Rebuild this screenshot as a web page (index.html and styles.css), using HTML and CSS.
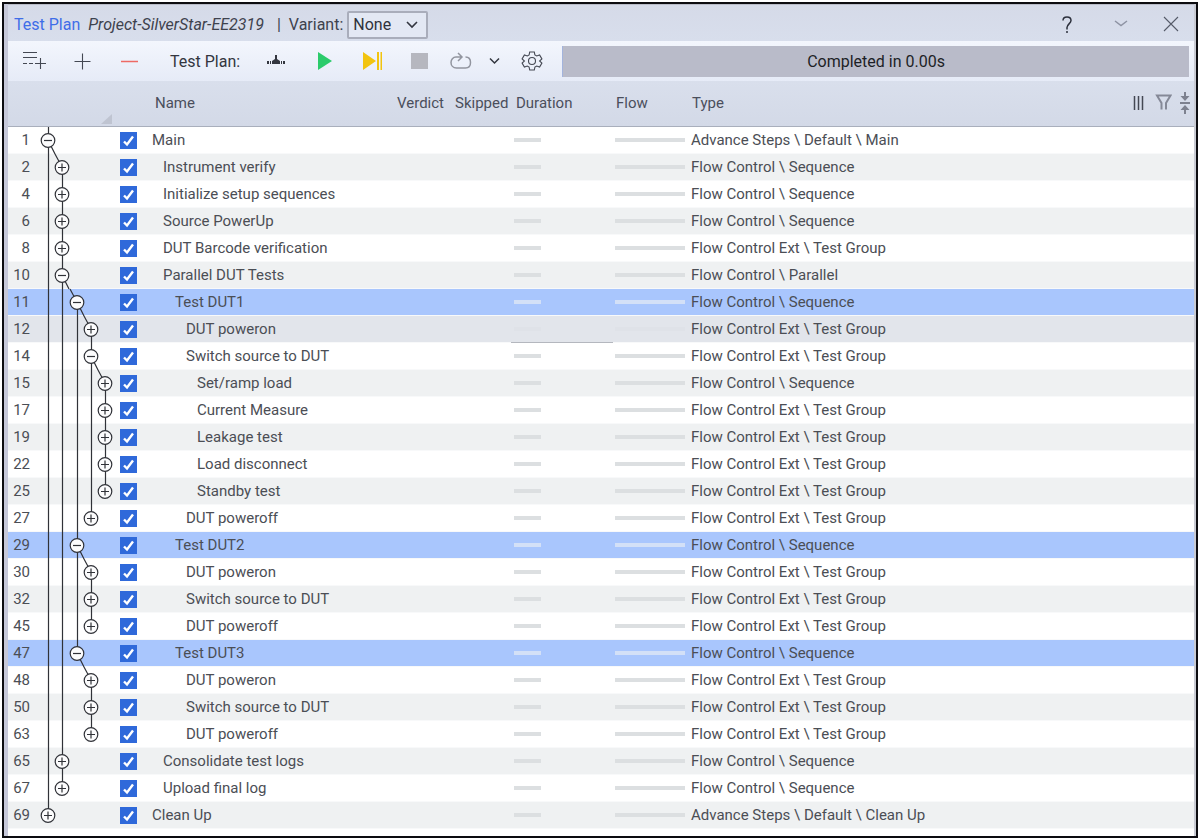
FILE: index.html
```html
<!DOCTYPE html>
<html lang="en">

<head>
    <meta charset="UTF-8">
    <meta name="viewport" content="width=device-width, initial-scale=1.0">
    <title>Test Plan</title>
    <link rel="stylesheet" href="styles.css">
</head>

<body>
    <div class="panel">
        <header class="title-bar">
            <span class="title">Test Plan</span>
            <em class="project">Project-SilverStar-EE2319</em>
            <span class="divider">|</span>
            <label for="variant">Variant:</label>
            <select class="variant" id="variant">
                <option>None</option>
            </select>
            <div class="window-buttons">
                <button type="button" class="icon-button" aria-label="Help">
                    <svg width="24" height="24" viewBox="0 0 24 24" stroke="#2c303c"><path d="M8 7.5C8 5 9.5 4 12 4s4 1.3 4 3.5c0 2.8-4 4-4 7v2M12 18v2"/></svg>
                </button>
                <button type="button" class="icon-button" aria-label="Collapse">
                    <svg width="24" height="24" viewBox="0 0 24 24" stroke="#8e93a3"><path d="M8 8l6 4.5L20 8"/></svg>
                </button>
                <button type="button" class="icon-button" aria-label="Close">
                    <svg class="thin" width="24" height="24" viewBox="0 0 24 24" stroke="#555a68"><path d="M5 4l14 14M19 4L5 18"/></svg>
                </button>
            </div>
        </header>

        <div class="toolbar">
            <button type="button" class="icon-button" aria-label="Add child step">
                <svg class="thin" width="24" height="24" viewBox="0 0 24 24" stroke="#444853"><path d="M1 3.5h14M1 8.5h14M1 14.5h4M7 14.5h4M13 14.5h11M18.5 9v11"/></svg>
            </button>
            <button type="button" class="icon-button" aria-label="Add step">
                <svg class="thin" width="24" height="24" viewBox="0 0 24 24" stroke="#444853"><path d="M4.5 12.5h16M12.5 4.5v16"/></svg>
            </button>
            <button type="button" class="icon-button" aria-label="Remove step">
                <svg width="24" height="24" viewBox="0 0 24 24" stroke="#ee6a64"><path d="M3 12.5h17"/></svg>
            </button>
            <span class="toolbar-label">Test Plan:</span>
            <button type="button" class="icon-button" aria-label="Breakpoints">
                <svg class="solid" width="24" height="24" viewBox="0 0 24 24" fill="#33363f"><path d="M3 12h2v3H3zM6 12h1v3H6zM8 12l3-2V6h2v4l3 2v3H8zM17 12h1v3h-1zM19 12h2v3h-2z"/></svg>
            </button>
            <button type="button" class="icon-button" aria-label="Run">
                <svg class="solid" width="24" height="24" viewBox="0 0 24 24" fill="#2bcb6b"><path d="M6 3l14 9L6 21z"/></svg>
            </button>
            <button type="button" class="icon-button" aria-label="Step">
                <svg class="solid" width="24" height="24" viewBox="0 0 24 24" fill="#f2c40f"><path d="M3 3l13 9L3 21zM17 3h2v18h-2zM20.5 3H22v18h-1.5z"/></svg>
            </button>
            <div class="run-options">
                <button type="button" class="icon-button" aria-label="Stop">
                    <svg class="solid" width="24" height="24" viewBox="0 0 24 24" fill="#b6b7bf"><path d="M3 4h17v16H3z"/></svg>
                </button>
                <button type="button" class="icon-button" aria-label="Repeat">
                    <svg width="24" height="24" viewBox="0 0 24 24" stroke="#92959f"><path d="M17.5 8c3.5 0 5 2.7 5 5.5s-1.500 5.500-5 5.500h-9c-3.500 0-5.500-2.700-5.500-5.500S5 8 8 8h5M10 4l4 4-4 4"/></svg>
                </button>
                <button type="button" class="icon-button small" aria-label="Repeat options">
                    <svg width="16" height="24" viewBox="0 0 16 24" stroke="#33363f"><path d="M2 9.5L6.5 14 11 9.5"/></svg>
                </button>
                <button type="button" class="icon-button" aria-label="Settings">
                    <svg class="thin" width="24" height="24" viewBox="0 0 24 24" stroke="#444853"><path d="M9.7 3h4.6l.6 3 1.8 1 2.9-1 2.3 4-2.3 2 2.3 2-2.3 4-2.9-1-1.8 1-.6 3H9.7l-.6-3-1.8-1-2.9 1-2.3-4 2.3-2-2.3-2 2.3-4 2.9 1 1.8-1z"/><circle cx="12" cy="12" r="3.5"/></svg>
                </button>
            </div>
            <div class="progress" role="progressbar" aria-valuenow="100">Completed in 0.00s</div>
        </div>

        <table class="steps">
            <colgroup>
                <col class="col-number">
                <col class="col-tree">
                <col class="col-check">
                <col class="col-name">
                <col class="col-verdict">
                <col class="col-skipped">
                <col class="col-duration">
                <col class="col-flow">
                <col class="col-type">
            </colgroup>
            <thead>
                <tr>
                    <th></th>
                    <th class="corner"><svg width="11" height="10" viewBox="0 0 11 10"><path d="M11 0v10H0z" fill="#bfc4d1"/></svg></th>
                    <th></th>
                    <th>Name</th>
                    <th>Verdict</th>
                    <th>Skipped</th>
                    <th class="duration-head">Duration</th>
                    <th>Flow</th>
                    <th>
                        <div class="type-head">
                            Type
                            <div class="view-buttons">
                                <button type="button" class="icon-button mini" aria-label="Columns">
                                    <svg width="18" height="24" viewBox="0 0 18 24" stroke="#444853"><path d="M2.5 5v14M6.5 5v14M10.5 5v14"/></svg>
                                </button>
                                <button type="button" class="icon-button mini" aria-label="Filter">
                                    <svg width="18" height="24" viewBox="0 0 18 24" stroke="#858997"><path class="thick" d="M7.5 18.5V12L3 4.500h13.500L12 12v6.500"/></svg>
                                </button>
                                <button type="button" class="icon-button mini" aria-label="Collapse all">
                                    <svg width="18" height="24" viewBox="0 0 18 24" stroke="#7d818f"><path class="thick" d="M4 12h10M9 1v6M9 17v6"/><path d="M4.500 5h9L9 10zM4.500 19h9L9 14z" fill="#7d818f" stroke="none"/></svg>
                                </button>
                            </div>
                        </div>
                    </th>
                </tr>
            </thead>
            <tbody id="stepRows"></tbody>
        </table>
    </div>

    <script>
        const SEQUENCE = 'Flow Control \\ Sequence';
        const GROUP = 'Flow Control Ext \\ Test Group';

        // number, level, name, type, row state
        const steps = [
            [1, 0, 'Main', 'Advance Steps \\ Default \\ Main'],
            [2, 1, 'Instrument verify', SEQUENCE],
            [4, 1, 'Initialize setup sequences', SEQUENCE],
            [6, 1, 'Source PowerUp', SEQUENCE],
            [8, 1, 'DUT Barcode verification', GROUP],
            [10, 1, 'Parallel DUT Tests', 'Flow Control \\ Parallel'],
            [11, 2, 'Test DUT1', SEQUENCE, 'selected'],
            [12, 3, 'DUT poweron', GROUP, 'hovered'],
            [14, 3, 'Switch source to DUT', GROUP],
            [15, 4, 'Set/ramp load', SEQUENCE],
            [17, 4, 'Current Measure', GROUP],
            [19, 4, 'Leakage test', GROUP],
            [22, 4, 'Load disconnect', GROUP],
            [25, 4, 'Standby test', GROUP],
            [27, 3, 'DUT poweroff', GROUP],
            [29, 2, 'Test DUT2', SEQUENCE, 'selected'],
            [30, 3, 'DUT poweron', GROUP],
            [32, 3, 'Switch source to DUT', GROUP],
            [45, 3, 'DUT poweroff', GROUP],
            [47, 2, 'Test DUT3', SEQUENCE, 'selected'],
            [48, 3, 'DUT poweron', GROUP],
            [50, 3, 'Switch source to DUT', GROUP],
            [63, 3, 'DUT poweroff', GROUP],
            [65, 1, 'Consolidate test logs', SEQUENCE],
            [67, 1, 'Upload final log', SEQUENCE],
            [69, 0, 'Clean Up', 'Advance Steps \\ Default \\ Clean Up']
        ];

        const nodeX = [12, 26, 41, 55, 69];

        // true when the branch at this level goes on below row i
        function continues(i, level) {
            for (let j = i + 1; j < steps.length; j++) {
                if (steps[j][1] < level) return false;
                if (steps[j][1] === level) return true;
            }
            return false;
        }

        function drawTree(i) {
            const level = steps[i][1];
            const x = nodeX[level];
            const open = i + 1 < steps.length && steps[i + 1][1] > level;
            let d = '';

            for (let l = 0; l < level; l++) {
                if (continues(i, l)) d += `M${nodeX[l] + 0.5} 0V27`;
            }
            if (i > 0 && steps[i - 1][1] < level) {
                d += `M${x - 7} 0L${x} 13`;
            } else {
                d += `M${x + 0.5} 0V13`;
            }
            if (continues(i, level)) d += `M${x + 0.5} 13V27`;
            if (open) d += `M${x} 13L${x + 7} 27`;

            const sign = open ? `M${x - 4} 13.5h8` : `M${x - 4} 13.5h8M${x} 9.5v8`;
            return `<svg class="tree" width="82" height="26" viewBox="0 0 82 26">
                <path d="${d}"/><circle cx="${x}" cy="13.5" r="6.8"/><path d="${sign}"/></svg>`;
        }

        document.getElementById('stepRows').innerHTML = steps.map(([number, level, name, type, state], i) => `
            <tr class="${state || ''}">
                <td class="number">${number}</td>
                <td>${drawTree(i)}</td>
                <td><input type="checkbox" class="check" id="step${number}" checked></td>
                <td><label class="level-${level}" for="step${number}">${name}</label></td>
                <td></td>
                <td></td>
                <td class="duration"><div class="bar short"></div></td>
                <td><div class="bar"></div></td>
                <td class="type">${type}</td>
            </tr>`).join('');
    </script>
</body>

</html>
```
FILE: styles.css
```css
* {
    margin: 0;
    padding: 0;
    box-sizing: border-box;
}

body {
    font-family: Roboto, "Liberation Sans", sans-serif;
    font-size: 16px;
    color: #4b4e55;
    background: #fff;
    min-height: 100vh;
    padding: 2px;
    display: flex;
}

.panel {
    flex: 1;
    min-width: 0;
    border: 2px solid #0c0c10;
    box-shadow: inset 4px 0 #c6c8d9, inset -2px 0 #c9cbd3, inset 0 1px #b9bcc8;
    padding: 1px 2px 0 4px;
}

.title-bar {
    height: 36px;
    padding: 3px 11px 0 6px;
    display: flex;
    align-items: center;
    background: linear-gradient(#d5dae8, #d8deec);
    color: #3e424e;
}

.title {
    color: #3f6de8;
}

.project {
    margin-left: 8px;
}

.divider {
    margin: 0 8px 0 13px;
}

.variant {
    width: 81px;
    height: 28px;
    margin-left: 4px;
    padding-left: 4px;
    appearance: none;
    border: 2px solid #a9adbb;
    border-radius: 2px;
    background: #e3e8f4 url('data:image/svg+xml,<svg xmlns="http://www.w3.org/2000/svg" width="12" height="8"><path d="M1 1l5 5 5-5" fill="none" stroke="%23333640" stroke-width="1.6"/></svg>') no-repeat right 8px center;
    font: inherit;
    color: #2f323c;
}

.window-buttons {
    margin-left: auto;
    display: flex;
    gap: 28px;
}

.icon-button {
    width: 24px;
    height: 24px;
    flex: none;
    border: none;
    background: none;
    cursor: pointer;
}

.icon-button.small {
    width: 16px;
}

.icon-button.mini {
    width: 18px;
}

.icon-button svg {
    display: block;
    stroke-width: 1.5;
}

.icon-button svg:not(.solid) {
    fill: none;
}

.icon-button .thin {
    stroke-width: 1.1;
}

.icon-button .thick {
    stroke-width: 2;
}

.toolbar {
    height: 40px;
    padding: 0 5px 0 14px;
    display: flex;
    align-items: center;
    gap: 24px;
    background: linear-gradient(#f3f6fd, #e6ebf7);
    color: #33363f;
}

.toolbar-label {
    margin-left: 4px;
}

.run-options {
    display: flex;
    gap: 16px;
}

.progress {
    flex: 1;
    height: 31px;
    margin-left: -6px;
    line-height: 31px;
    border-left: 1px solid #a3b4dd;
    background: #b9bbc9;
    color: #1d1f26;
    text-align: center;
}

.steps {
    width: 100%;
    table-layout: fixed;
    border-spacing: 0;
}

.col-number {
    width: 28px;
}

.col-tree {
    width: 82px;
}

.col-check {
    width: 34px;
}

.col-name {
    width: 242px;
}

.col-verdict {
    width: 58px;
}

.col-skipped {
    width: 59px;
}

.col-duration {
    width: 102px;
}

.col-flow {
    width: 76px;
}

.steps th {
    height: 46px;
    padding: 0 0 2px 3px;
    border-bottom: 1px solid #a9afbc;
    background: linear-gradient(#d9dfec, #d3d9e7);
    font-size: 15px;
    font-weight: normal;
    text-align: left;
    color: #4b4f5c;
}

.steps .corner {
    padding-right: 6px;
    vertical-align: bottom;
}

.steps .duration-head {
    padding-left: 5px;
}

.corner svg {
    display: block;
    margin-left: auto;
}

.type-head {
    display: flex;
    align-items: center;
    justify-content: space-between;
}

.view-buttons {
    display: flex;
    gap: 4px;
}

.steps td {
    height: 27px;
    border-bottom: 1px solid #f8f9fa;
    font-size: 15px;
    line-height: 26px;
    white-space: nowrap;
}

.steps tbody tr:nth-child(even) {
    background: #eff1f2;
}

.steps tbody tr.selected {
    background: #a9c6fd;
}

.steps tbody tr.hovered {
    background: #e2e5eb;
}

.steps .number {
    padding-right: 6px;
    text-align: right;
}

.tree {
    display: block;
    overflow: visible;
    fill: none;
    stroke: #303238;
    stroke-width: 1.2;
}

.tree circle {
    fill: #fcfcfd;
}

.check {
    display: block;
    width: 17px;
    height: 17px;
    margin-left: 2px;
    appearance: none;
    background: #2f69da url('data:image/svg+xml,<svg xmlns="http://www.w3.org/2000/svg" width="17" height="17"><path d="M4 9.5l3 3L13 4.5" fill="none" stroke="white" stroke-width="2.4"/></svg>');
}

.level-1 {
    padding-left: 11px;
}

.level-2 {
    padding-left: 23px;
}

.level-3 {
    padding-left: 34px;
}

.level-4 {
    padding-left: 45px;
}

.bar {
    width: 70px;
    height: 4px;
    margin-left: 2px;
    background: #dcdfe1;
}

.bar.short {
    width: 27px;
    margin-left: 3px;
}

.selected .bar {
    background: #d3e0f7;
}

.hovered .bar {
    background: #dfe2e8;
}

.steps .hovered .duration {
    border-bottom-color: #b4b7be;
}

.type {
    padding-left: 2px;
}
```
